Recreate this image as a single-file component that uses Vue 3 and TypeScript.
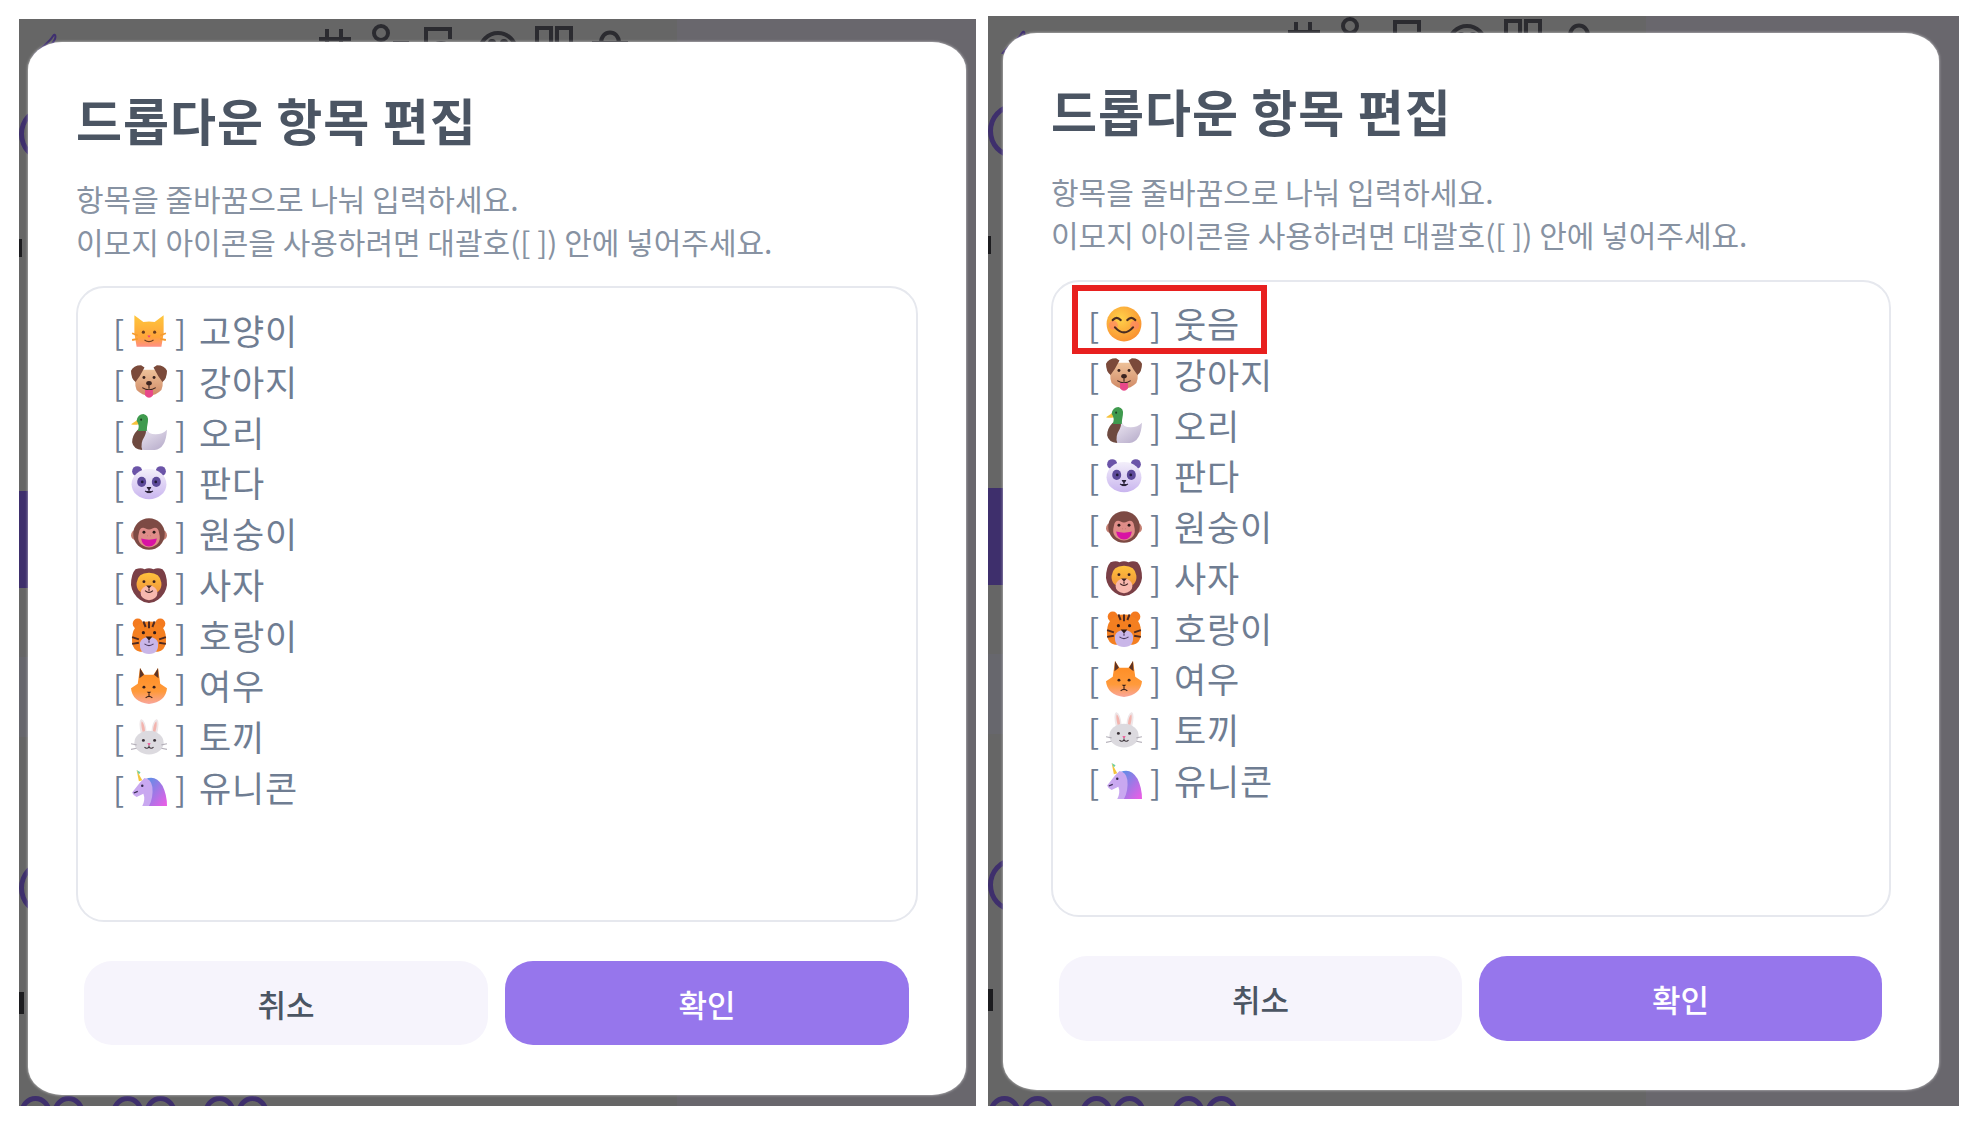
<script setup lang="ts">
type Row = { icon: string; label: string }

const animals: Row[] = [
  { icon: 'dog', label: '강아지' },
  { icon: 'duck', label: '오리' },
  { icon: 'panda', label: '판다' },
  { icon: 'monkey', label: '원숭이' },
  { icon: 'lion', label: '사자' },
  { icon: 'tiger', label: '호랑이' },
  { icon: 'fox', label: '여우' },
  { icon: 'rabbit', label: '토끼' },
  { icon: 'unicorn', label: '유니콘' }
]

const shots = [
  { key: 'before', rows: [{ icon: 'cat', label: '고양이' }, ...animals], marked: false },
  { key: 'after', rows: [{ icon: 'smile', label: '웃음' }, ...animals], marked: true }
]
</script>

<template>
  <div class="page">
    <svg class="defs" width="0" height="0" aria-hidden="true">
      <defs>
        <linearGradient id="g-cat" x1="0" y1="0" x2="0" y2="1">
          <stop offset="0" stop-color="#ffc73c" /><stop offset=".7" stop-color="#ffa43a" /><stop offset="1" stop-color="#ff8f86" />
        </linearGradient>
        <linearGradient id="g-dog" x1="0" y1="0" x2="0" y2="1">
          <stop offset="0" stop-color="#eec29a" /><stop offset="1" stop-color="#d08a66" />
        </linearGradient>
        <linearGradient id="g-duck" x1="0" y1="0" x2="1" y2="1">
          <stop offset="0" stop-color="#f4eff8" /><stop offset="1" stop-color="#b4a9c8" />
        </linearGradient>
        <linearGradient id="g-panda" x1="0" y1="0" x2="0" y2="1">
          <stop offset="0" stop-color="#f3effa" /><stop offset="1" stop-color="#c9b5ef" />
        </linearGradient>
        <linearGradient id="g-lion" x1="0" y1="0" x2="0" y2="1">
          <stop offset="0" stop-color="#ffc23c" /><stop offset="1" stop-color="#f0913a" />
        </linearGradient>
        <linearGradient id="g-fox" x1="0" y1="0" x2="0" y2="1">
          <stop offset="0" stop-color="#ff8a1f" /><stop offset=".65" stop-color="#ff9a3a" /><stop offset="1" stop-color="#f9a69c" />
        </linearGradient>
        <linearGradient id="g-mane" x1="0" y1="0" x2="1" y2="1">
          <stop offset="0" stop-color="#4f93e6" /><stop offset="1" stop-color="#f05ce6" />
        </linearGradient>
        <radialGradient id="g-smile" cx=".4" cy=".35" r=".75">
          <stop offset="0" stop-color="#ffd24a" /><stop offset="1" stop-color="#f98a2e" />
        </radialGradient>
      </defs>
    </svg>

    <section v-for="shot in shots" :key="shot.key" class="shot" :class="shot.key">
      <div class="backdrop">
        <div class="side-column"></div>
        <div class="purple-strip"></div>
        <div class="gray-strip"></div>
        <div class="ring ring-top"></div>
        <div class="ring ring-mid"></div>
        <div class="frag frag-c"></div>
        <div class="frag frag-d"></div>
        <svg class="pen" viewBox="0 0 26 24"><path d="M2 24 C8 16 18 10 22 3 C24 0 25 3 24 6 C21 12 15 18 12 24" fill="none" stroke="#3f2f70" stroke-width="2" /></svg>
        <svg class="toolbar" viewBox="0 0 320 30" fill="none" stroke="#2b2b30" stroke-width="4">
          <path d="M8 10v20M22 10v20M0 20h32" />
          <circle cx="62" cy="14" r="7" /><path d="M74 24h14v8" />
          <path d="M107 26V10h24v10M112 30c4-8 16-8 20 0" />
          <circle cx="179" cy="32" r="18" /><circle cx="173" cy="24" r="2" /><circle cx="185" cy="24" r="2" />
          <path d="M218 9h14v20h-14zM238 9h14v20h-14z" />
          <path d="M273 24h36M282 24c0-14 18-14 18 0M278 24v8M304 24v8" />
        </svg>
        <div class="bottom-rings">
          <span v-for="n in 6" :key="n"></span>
        </div>
      </div>

      <div class="modal">
        <h2 class="title">드롭다운 항목 편집</h2>
        <div class="desc">
          <p>항목을 줄바꿈으로 나눠 입력하세요.</p>
          <p>이모지 아이콘을 사용하려면 대괄호([ ]) 안에 넣어주세요.</p>
        </div>

        <div class="editor">
          <div v-if="shot.marked" class="marker"></div>
          <div v-for="row in shot.rows" :key="row.icon" class="row">
            <span class="bracket">[</span>
            <svg class="emoji" viewBox="0 0 32 32">
              <g v-if="row.icon === 'cat'">
                <path d="M3 2 11 8Q16 7 21 8L29 2 29 18 27 30H5L3 18Z" fill="url(#g-cat)" />
                <path d="M1 18 6 20M1 24 6 23M31 18 26 20M31 24 26 23" stroke="#f59b2f" stroke-width="1.6" />
                <circle cx="11" cy="17" r="1.4" fill="#6b3d1e" /><circle cx="21" cy="17" r="1.4" fill="#6b3d1e" />
                <path d="M14.5 20h3l-1.5 2z" fill="#f2387a" /><path d="M12 24q4 3 8 0" stroke="#6b3d1e" fill="none" />
              </g>
              <g v-else-if="row.icon === 'smile'">
                <circle cx="16" cy="16" r="15.5" fill="url(#g-smile)" />
                <circle cx="6.5" cy="17" r="4" fill="#ff7a70" opacity=".55" /><circle cx="25.5" cy="17" r="4" fill="#ff7a70" opacity=".55" />
                <path d="M6 12.5q3.5-4 7 0M19 12.5q3.5-4 7 0M8 19q8 9 16 0" fill="none" stroke="#4a2c22" stroke-width="2" stroke-linecap="round" />
              </g>
              <g v-else-if="row.icon === 'dog'">
                <path d="M6 5H26Q30 16 27 23 22 28 16 28 10 28 5 23 2 16 6 5Z" fill="url(#g-dog)" />
                <path d="M9 1Q2 1 0 6 0 13 4 16 8 11 12 3ZM23 1Q30 1 32 6 32 13 28 16 24 11 20 3Z" fill="#7b4a3a" />
                <circle cx="11.500" cy="12" r="1.300" fill="#3b2420" /><circle cx="20.500" cy="12" r="1.300" fill="#3b2420" />
                <ellipse cx="16" cy="17" rx="2.500" ry="1.800" fill="#3b2420" />
                <path d="M16 18v4M10 21q6 4 12 0" stroke="#3b2420" fill="none" />
                <path d="M12.500 23h7v5q-3.500 4-7 0z" fill="#e8488a" />
              </g>
              <g v-else-if="row.icon === 'duck'">
                <path d="M8 14Q2 19 2 26 4 32 12 32H21Q31 31 32 14 28 18 22 18 15 18 14 13Z" fill="url(#g-duck)" />
                <path d="M6 14Q1 19 1 25 2 31 10 32 8 26 12 20 14 16 13 13Z" fill="#6e4a40" />
                <path d="M6 5 0 9Q3 10 7 9Z" fill="#f6c23c" />
                <path d="M5 6Q6 0 11 0 16 1 15 7 14 12 14 15H6Q8 10 5 6Z" fill="#3f9a4e" />
                <circle cx="9" cy="5" r=".9" fill="#1f3d22" />
              </g>
              <g v-else-if="row.icon === 'panda'">
                <circle cx="5.500" cy="5.500" r="4.500" fill="#6b54a8" /><circle cx="26.500" cy="5.500" r="4.500" fill="#6b54a8" />
                <ellipse cx="16" cy="17" rx="15.500" ry="13.500" fill="url(#g-panda)" />
                <ellipse cx="9.500" cy="15" rx="4" ry="4.500" fill="#5d4a9a" /><ellipse cx="22.500" cy="15" rx="4" ry="4.500" fill="#5d4a9a" />
                <circle cx="10" cy="15" r="1.200" fill="#1f1836" /><circle cx="22" cy="15" r="1.200" fill="#1f1836" />
                <path d="M14.500 20h3L16 22zM16 22v1.500M12.500 23q3.500 3 3.500 0 0 3 3.500 0" fill="#2a2238" stroke="#2a2238" stroke-linejoin="round" />
              </g>
              <g v-else-if="row.icon === 'monkey'">
                <circle cx="4.500" cy="17" r="4.500" fill="#c47f72" /><circle cx="27.500" cy="17" r="4.500" fill="#c47f72" />
                <circle cx="16" cy="16" r="14" fill="#7d4a44" />
                <path d="M7 15Q8 9 13 11 16 13 19 11 24 9 25 15 28 26 16 28 4 26 7 15Z" fill="#df8d88" />
                <circle cx="11.500" cy="14.500" r="1.300" fill="#2f1b1b" /><circle cx="20.500" cy="14.500" r="1.300" fill="#2f1b1b" />
                <path d="M14.500 17.500h.1M17.500 17.500h.1" stroke="#2f1b1b" stroke-width="1.200" />
                <path d="M9 20Q16 22 23 20 22 27 16 27 10 27 9 20Z" fill="#d813a4" />
              </g>
              <g v-else-if="row.icon === 'lion'">
                <path d="M4 2Q9 0 12 2 16 0 20 2 24 0 28 2 32 6 32 16 31 24 24 29 20 32 16 32 12 32 8 29 1 24 0 16 0 6 4 2Z" fill="#7a3f46" />
                <path d="M5 14Q6 5 16 5 26 5 27 14 28 23 16 25 4 23 5 14Z" fill="url(#g-lion)" />
                <circle cx="11.500" cy="13" r="1.300" fill="#3a2020" /><circle cx="20.500" cy="13" r="1.300" fill="#3a2020" />
                <ellipse cx="16" cy="23" rx="7.500" ry="6.500" fill="#f8b9ae" />
                <path d="M13.500 16.500h5L16 19z" fill="#3a2020" /><path d="M16 19v2M12.500 21q3.500 3 7 0" stroke="#3a2020" fill="none" />
              </g>
              <g v-else-if="row.icon === 'tiger'">
                <circle cx="6" cy="5" r="4.500" fill="#f47a1f" /><circle cx="26" cy="5" r="4.500" fill="#f47a1f" />
                <path d="M4 8Q8 3 16 3 24 3 28 8 32 14 31 22 30 29 24 30H8Q2 29 1 22 0 14 4 8Z" fill="#f47f20" />
                <path d="M11 3l2 5M16 3v6M21 3l-2 5M1 17l6 2M1 23l6-1M31 17l-6 2M31 23l-6-1" stroke="#4f2a22" stroke-width="1.800" />
                <circle cx="11" cy="13" r="1.400" fill="#2e1a18" /><circle cx="21" cy="13" r="1.400" fill="#2e1a18" />
                <path d="M8 22Q9 17 16 17 23 17 24 22 25 32 16 32 7 32 8 22Z" fill="#c9b6e8" />
                <path d="M13 16.500h6L16 20z" fill="#2e1a18" /><path d="M16 20v2M12 23q4 3 8 0" stroke="#4a3a5e" fill="none" />
              </g>
              <g v-else-if="row.icon === 'fox'">
                <path d="M8 0 12 6H20L24 0 26 14 32 18Q31 30 16 32 1 30 0 18L6 14Z" fill="url(#g-fox)" />
                <path d="M8 0 11.500 6 7.500 9ZM24 0 20.500 6 24.500 9Z" fill="#5e3426" />
                <circle cx="11.500" cy="17" r="1.300" fill="#3a201a" /><circle cx="20.500" cy="17" r="1.300" fill="#3a201a" />
                <path d="M14 21h4l-2 2z" fill="#3a201a" /><path d="M16 23v2M13 26.500q3-2.500 6 0" stroke="#3a201a" fill="none" />
              </g>
              <g v-else-if="row.icon === 'rabbit'">
                <path d="M9 14Q6 2 9 0 13 1 14 12ZM23 14Q26 2 23 0 19 1 18 12Z" fill="#eee6e8" />
                <path d="M10.500 12Q8.500 5 9.500 2 12 4 12.500 11ZM21.500 12Q23.500 5 22.500 2 20 4 19.500 11Z" fill="#f3b4ae" />
                <ellipse cx="16" cy="21" rx="13" ry="10.500" fill="#dcdadf" />
                <circle cx="11" cy="19" r="1.300" fill="#3a3238" /><circle cx="21" cy="19" r="1.300" fill="#3a3238" />
                <path d="M14.500 21.500h3L16 23.500z" fill="#f0408a" />
                <path d="M12 25q2 2 4 0 2 2 4 0M16 23.500V25" stroke="#3a3238" fill="none" />
                <path d="M0 22 5 23M0 27 5 26M32 22 27 23M32 27 27 26" stroke="#b5b1ba" />
              </g>
              <g v-else-if="row.icon === 'unicorn'">
                <path d="M13 8Q22 4 28 14 32 22 32 32H12Q16 24 13 18Z" fill="url(#g-mane)" />
                <path d="M12 7Q18 8 19 15 20 24 16 32H10Q13 26 11 21L5 24Q2 23 1 20L8 11Z" fill="#c9a8f0" />
                <path d="M5 0 10 9 7 10Z" fill="#f4c43c" /><path d="M5 0 7 4 8.500 2Z" fill="#6fd0a0" />
                <circle cx="10" cy="14" r="1.100" fill="#352a50" />
                <path d="M2.500 20.500 6 19" stroke="#352a50" />
              </g>
            </svg>
            <span class="bracket">]</span>
            <span class="label">{{ row.label }}</span>
          </div>
        </div>

        <div class="actions">
          <button class="btn cancel" type="button">취소</button>
          <button class="btn confirm" type="button">확인</button>
        </div>
      </div>
    </section>
  </div>
</template>

<style>
html,
body {
  background: #ffffff;
}
</style>

<style scoped>
.page {
  display: flex;
  align-items: flex-end;
  height: 1106px;
  padding-left: 19px;
  font-family: "Noto Sans CJK KR", "Noto Sans", sans-serif;
  overflow: hidden;
}

.defs {
  position: absolute;
}

.shot {
  position: relative;
  flex: none;
  box-sizing: border-box;
  display: flex;
  flex-direction: column;
  background: #666666;
  overflow: hidden;
}

.shot.before {
  width: 957px;
  height: 1087px;
  padding: 23px 10px 0 9px;
}

.shot.after {
  width: 971px;
  height: 1090px;
  margin-left: 12px;
  padding: 17px 20px 0 15px;
}

.backdrop {
  position: absolute;
  inset: 0;
}

.side-column {
  position: absolute;
  top: 0;
  bottom: 0;
  left: 658px;
  right: 0;
  background: #69676d;
}

.purple-strip {
  position: absolute;
  left: 0;
  top: 472px;
  width: 20px;
  height: 97px;
  background: #3e2f6c;
}

.gray-strip {
  position: absolute;
  left: 0;
  top: 638px;
  width: 20px;
  height: 80px;
  background: #67676d;
}

.ring {
  position: absolute;
  left: 0;
  width: 40px;
  height: 44px;
  border: 5px solid #3e2f6c;
  border-radius: 50%;
}

.ring-top {
  top: 88px;
}

.ring-mid {
  top: 842px;
}

.frag {
  position: absolute;
  left: 0;
  background: #1c1c1f;
}

.frag-c {
  top: 220px;
  width: 3px;
  height: 18px;
}

.frag-d {
  top: 973px;
  width: 5px;
  height: 22px;
}

.pen {
  position: absolute;
  left: 12px;
  top: 14px;
  width: 26px;
  height: 24px;
}

.toolbar {
  position: absolute;
  left: 300px;
  top: 0;
  width: 320px;
  height: 30px;
}

.after .toolbar {
  top: -4px;
}

.bottom-rings {
  position: absolute;
  left: 0;
  bottom: -26px;
  display: flex;
}

.bottom-rings span {
  width: 33px;
  height: 36px;
  border: 5px solid #3e2f6c;
  border-radius: 50%;
  box-sizing: border-box;
}

.bottom-rings span:nth-child(2n) {
  margin-right: 26px;
}

.modal {
  position: relative;
  display: flex;
  flex-direction: column;
  box-sizing: border-box;
  background: #ffffff;
  border-radius: 34px / 28px;
  padding: 47px 48px 0;
  box-shadow: 0 0 3px rgba(255, 255, 255, 0.7);
}

.before .modal {
  height: 1053px;
}

.after .modal {
  height: 1057px;
}

.title {
  margin: 0;
  font-size: 50px;
  line-height: 60px;
  font-weight: 700;
  letter-spacing: 1px;
  color: #4b5563;
}

.desc {
  margin-top: 28px;
  font-size: 30px;
  line-height: 43px;
  color: #8792a2;
}

.after .desc {
  margin-top: 30px;
}

.desc p {
  margin: 0;
  white-space: nowrap;
}

.editor {
  position: relative;
  box-sizing: border-box;
  height: 636px;
  margin-top: 23px;
  padding: 16px 35px;
  border: 2px solid #e6e8ee;
  border-radius: 28px;
}

.after .editor {
  height: 637px;
  margin-top: 24px;
  padding-top: 15px;
}

.marker {
  position: absolute;
  left: 19px;
  top: 3px;
  width: 195px;
  height: 69px;
  box-sizing: border-box;
  border: 6px solid #e8201f;
}

.row {
  display: flex;
  align-items: center;
  height: 50.8px;
  font-size: 35px;
  color: #6f7d92;
}

.bracket {
  width: 10px;
  margin-top: 3px;
  font-size: 33px;
  line-height: 50px;
  flex: none;
}

.emoji {
  flex: none;
  width: 36px;
  height: 36px;
  margin: 3px 8px 0;
}

.label {
  margin-left: 14px;
  letter-spacing: 0.8px;
  white-space: nowrap;
}

.actions {
  display: flex;
  gap: 17px;
  margin-top: 39px;
  padding: 0 9px 0 8px;
}

.btn {
  flex: 1;
  height: 84px;
  border: 0;
  border-radius: 28px;
  font-family: inherit;
  font-size: 31px;
  font-weight: 500;
}

.after .btn {
  height: 85px;
}

.cancel {
  background: #f6f4fc;
  color: #4b5563;
}

.confirm {
  background: #9676ec;
  color: #ffffff;
}
</style>
